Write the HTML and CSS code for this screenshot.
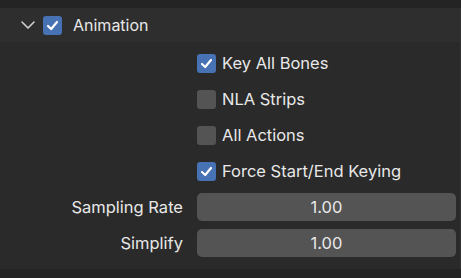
FILE: index.html
```html
<!DOCTYPE html>
<html>
  <head>
    <meta charset="UTF-8">
    <title>Animation</title>
    <link rel="stylesheet" href="styles.css">
  </head>
  <body>
    <div class="panel">
      <div class="panel-header">
        <svg class="chevron" width="14" height="8" viewBox="0 0 14 8">
          <path d="M1 1 L7 7 L13 1" fill="none" stroke="#cfcfcf" stroke-width="1.6" stroke-linecap="round" stroke-linejoin="round"/>
        </svg>
        <span class="check on">
          <svg width="19" height="19" viewBox="0 0 19 19"><path d="M5 10 L8.2 13 L14 6" fill="none" stroke="#fff" stroke-width="2.2" stroke-linecap="round" stroke-linejoin="round"/></svg>
        </span>
        <span class="header-label">Animation</span>
      </div>
      <div class="panel-body">
        <div class="check-row">
          <span class="check on">
            <svg width="19" height="19" viewBox="0 0 19 19"><path d="M5 10 L8.2 13 L14 6" fill="none" stroke="#fff" stroke-width="2.2" stroke-linecap="round" stroke-linejoin="round"/></svg>
          </span>
          <span>Key All Bones</span>
        </div>
        <div class="check-row">
          <span class="check"></span>
          <span>NLA Strips</span>
        </div>
        <div class="check-row">
          <span class="check"></span>
          <span>All Actions</span>
        </div>
        <div class="check-row">
          <span class="check on">
            <svg width="19" height="19" viewBox="0 0 19 19"><path d="M5 10 L8.2 13 L14 6" fill="none" stroke="#fff" stroke-width="2.2" stroke-linecap="round" stroke-linejoin="round"/></svg>
          </span>
          <span>Force Start/End Keying</span>
        </div>
        <div class="field-row">
          <span class="field-label">Sampling Rate</span>
          <div class="field">1.00</div>
        </div>
        <div class="field-row">
          <span class="field-label">Simplify</span>
          <div class="field">1.00</div>
        </div>
      </div>
    </div>
  </body>
</html>
```

FILE: styles.css
```css
body {
  margin: 0;
  padding-top: 8px;
  background-color: #242424;
  font-family: "Inter", "DejaVu Sans", sans-serif;
  font-size: 16.5px;
  color: #e8e8e8;
}

.panel {
  width: 460px;
  border-right: 1px solid #333;
}

.panel-header {
  height: 34px;
  display: flex;
  align-items: center;
  background-color: #2e2e2e;
}

.chevron {
  margin-left: 21px;
  margin-right: 8px;
}

.header-label {
  margin-left: 11px;
  font-size: 16px;
}

.check {
  width: 19px;
  height: 19px;
  border-radius: 3px;
  background-color: #545454;
  flex-shrink: 0;
}

.check svg {
  display: block;
}

.check.on {
  background-color: #4772b3;
}

.panel-body {
  background-color: #2a2a2a;
  padding: 3px 0 8px 0;
}

.check-row {
  height: 36px;
  display: flex;
  align-items: center;
  gap: 6px;
  padding-left: 197px;
}

.field-row {
  height: 36px;
  display: grid;
  grid-template-columns: 183px 259px;
  column-gap: 14px;
  align-items: center;
}

.field-label {
  text-align: right;
}

.field {
  height: 28px;
  line-height: 28px;
  border-radius: 5px;
  background-color: #545454;
  text-align: center;
}
```
